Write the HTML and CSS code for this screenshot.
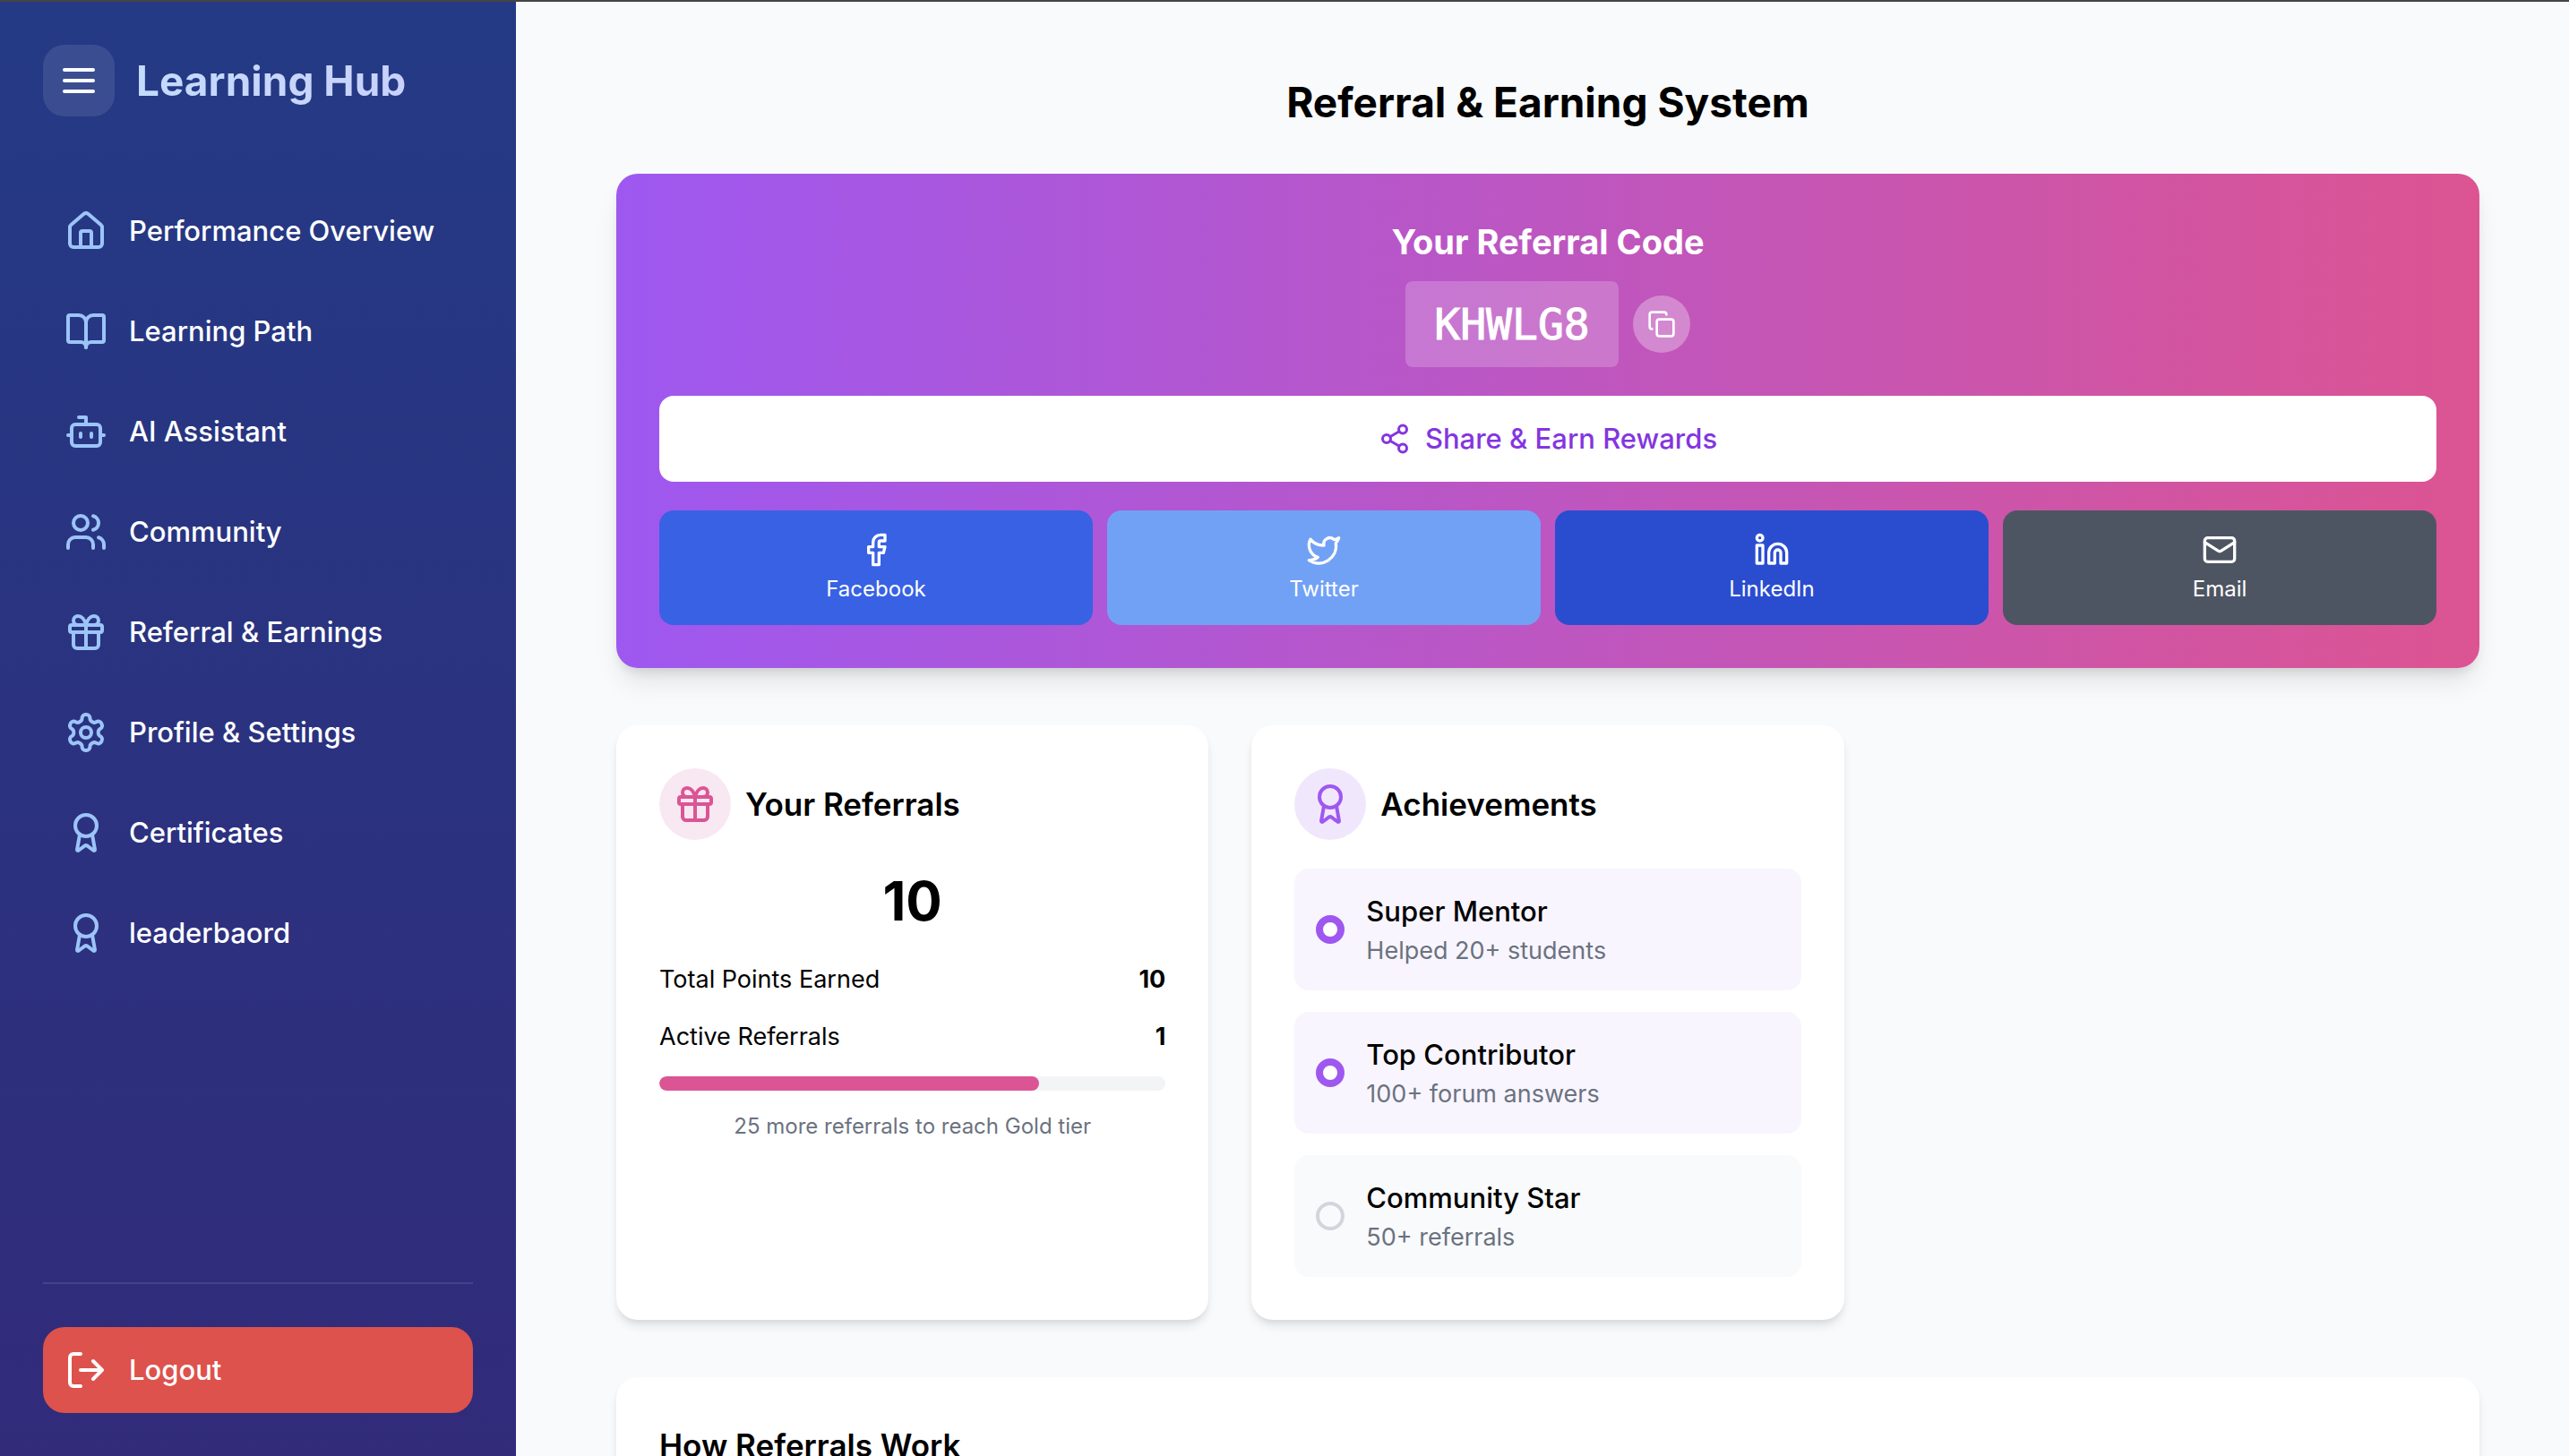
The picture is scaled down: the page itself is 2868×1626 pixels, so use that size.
FILE: index.html
```html
<!DOCTYPE html>
<html lang="en">
<head>
<meta charset="utf-8">
<meta name="viewport" content="width=device-width, initial-scale=1">
<title>Learning Hub</title>
<link rel="stylesheet" href="styles.css">
</head>
<body>
<svg class="sprite" aria-hidden="true">
  <symbol id="i-menu" viewBox="0 0 24 24"><path d="M4 6h16M4 12h16M4 18h16"/></symbol>
  <symbol id="i-home" viewBox="0 0 24 24"><path d="M15 21v-8a1 1 0 0 0-1-1h-4a1 1 0 0 0-1 1v8"/><path d="M3 10a2 2 0 0 1 .709-1.528l7-5.999a2 2 0 0 1 2.582 0l7 5.999A2 2 0 0 1 21 10v9a2 2 0 0 1-2 2H5a2 2 0 0 1-2-2z"/></symbol>
  <symbol id="i-book" viewBox="0 0 24 24"><path d="M12 7v14"/><path d="M3 18a1 1 0 0 1-1-1V4a1 1 0 0 1 1-1h5a4 4 0 0 1 4 4 4 4 0 0 1 4-4h5a1 1 0 0 1 1 1v13a1 1 0 0 1-1 1h-6a3 3 0 0 0-3 3 3 3 0 0 0-3-3z"/></symbol>
  <symbol id="i-bot" viewBox="0 0 24 24"><path d="M12 8V4H8"/><rect width="16" height="12" x="4" y="8" rx="2"/><path d="M2 14h2M20 14h2M15 13v2M9 13v2"/></symbol>
  <symbol id="i-users" viewBox="0 0 24 24"><path d="M16 21v-2a4 4 0 0 0-4-4H6a4 4 0 0 0-4 4v2"/><circle cx="9" cy="7" r="4"/><path d="M22 21v-2a4 4 0 0 0-3-3.87M16 3.13a4 4 0 0 1 0 7.75"/></symbol>
  <symbol id="i-gift" viewBox="0 0 24 24"><rect x="3" y="8" width="18" height="4" rx="1"/><path d="M12 8v13"/><path d="M19 12v7a2 2 0 0 1-2 2H7a2 2 0 0 1-2-2v-7"/><path d="M7.5 8a2.5 2.5 0 0 1 0-5A4.8 8 0 0 1 12 8a4.8 8 0 0 1 4.5-5 2.5 2.5 0 0 1 0 5"/></symbol>
  <symbol id="i-settings" viewBox="0 0 24 24"><path d="M12.22 2h-.44a2 2 0 0 0-2 2v.18a2 2 0 0 1-1 1.73l-.43.25a2 2 0 0 1-2 0l-.15-.08a2 2 0 0 0-2.73.73l-.22.38a2 2 0 0 0 .73 2.73l.15.1a2 2 0 0 1 1 1.72v.51a2 2 0 0 1-1 1.74l-.15.09a2 2 0 0 0-.73 2.73l.22.38a2 2 0 0 0 2.73.73l.15-.08a2 2 0 0 1 2 0l.43.25a2 2 0 0 1 1 1.73V20a2 2 0 0 0 2 2h.44a2 2 0 0 0 2-2v-.18a2 2 0 0 1 1-1.73l.43-.25a2 2 0 0 1 2 0l.15.08a2 2 0 0 0 2.73-.73l.22-.39a2 2 0 0 0-.73-2.73l-.15-.08a2 2 0 0 1-1-1.74v-.5a2 2 0 0 1 1-1.74l.15-.09a2 2 0 0 0 .73-2.73l-.22-.38a2 2 0 0 0-2.73-.73l-.15.08a2 2 0 0 1-2 0l-.43-.25a2 2 0 0 1-1-1.73V4a2 2 0 0 0-2-2z"/><circle cx="12" cy="12" r="3"/></symbol>
  <symbol id="i-award" viewBox="0 0 24 24"><path d="m15.477 12.89 1.515 8.526a.5.5 0 0 1-.81.47l-3.58-2.687a1 1 0 0 0-1.197 0l-3.586 2.686a.5.5 0 0 1-.81-.469l1.514-8.526"/><circle cx="12" cy="8" r="6"/></symbol>
  <symbol id="i-logout" viewBox="0 0 24 24"><path d="M9 21H5a2 2 0 0 1-2-2V5a2 2 0 0 1 2-2h4"/><path d="m16 17 5-5-5-5M21 12H9"/></symbol>
  <symbol id="i-copy" viewBox="0 0 24 24"><rect width="14" height="14" x="8" y="8" rx="2"/><path d="M4 16c-1.1 0-2-.9-2-2V4c0-1.1.9-2 2-2h10c1.1 0 2 .9 2 2"/></symbol>
  <symbol id="i-share" viewBox="0 0 24 24"><circle cx="18" cy="5" r="3"/><circle cx="6" cy="12" r="3"/><circle cx="18" cy="19" r="3"/><path d="m8.59 13.51 6.83 3.98M15.41 6.51l-6.82 3.98"/></symbol>
  <symbol id="i-facebook" viewBox="0 0 24 24"><path d="M18 2h-3a5 5 0 0 0-5 5v3H7v4h3v8h4v-8h3l1-4h-4V7a1 1 0 0 1 1-1h3z"/></symbol>
  <symbol id="i-twitter" viewBox="0 0 24 24"><path d="M22 4s-.7 2.1-2 3.4c1.6 10-9.4 17.3-18 11.6 2.2.1 4.4-.6 6-2C3 15.5.5 9.6 3 5c2.2 2.6 5.6 4.1 9 4-.9-4.2 4-6.6 7-3.8 1.1 0 3-1.2 3-1.2z"/></symbol>
  <symbol id="i-linkedin" viewBox="0 0 24 24"><path d="M16 8a6 6 0 0 1 6 6v7h-4v-7a2 2 0 0 0-4 0v7h-4v-7a6 6 0 0 1 6-6z"/><rect width="4" height="12" x="2" y="9"/><circle cx="4" cy="4" r="2"/></symbol>
  <symbol id="i-mail" viewBox="0 0 24 24"><rect width="20" height="16" x="2" y="4" rx="2"/><path d="m22 7-8.97 5.7a1.94 1.94 0 0 1-2.06 0L2 7"/></symbol>
</svg>

<div class="app">
  <aside class="sidebar">
    <header class="brand">
      <button class="menu-button" type="button" aria-label="Toggle menu"><svg class="icon"><use href="#i-menu"/></svg></button>
      <span class="brand-name">Learning Hub</span>
    </header>
    <nav class="nav">
      <a class="nav-link" href="#overview"><svg class="icon"><use href="#i-home"/></svg>Performance Overview</a>
      <a class="nav-link" href="#path"><svg class="icon"><use href="#i-book"/></svg>Learning Path</a>
      <a class="nav-link" href="#assistant"><svg class="icon"><use href="#i-bot"/></svg>AI Assistant</a>
      <a class="nav-link" href="#community"><svg class="icon"><use href="#i-users"/></svg>Community</a>
      <a class="nav-link" href="#referral"><svg class="icon"><use href="#i-gift"/></svg>Referral &amp; Earnings</a>
      <a class="nav-link" href="#profile"><svg class="icon"><use href="#i-settings"/></svg>Profile &amp; Settings</a>
      <a class="nav-link" href="#certificates"><svg class="icon"><use href="#i-award"/></svg>Certificates</a>
      <a class="nav-link" href="#leaderboard"><svg class="icon"><use href="#i-award"/></svg>leaderbaord</a>
    </nav>
    <footer class="sidebar-footer">
      <button class="logout" type="button"><svg class="icon"><use href="#i-logout"/></svg>Logout</button>
    </footer>
  </aside>

  <main class="main">
    <h1 class="page-title">Referral &amp; Earning System</h1>

    <section class="hero">
      <div class="hero-head">
        <h2 class="hero-title">Your Referral Code</h2>
        <div class="code-row">
          <code class="code">KHWLG8</code>
          <button class="copy" type="button" aria-label="Copy code"><svg class="icon icon-sm"><use href="#i-copy"/></svg></button>
        </div>
      </div>
      <button class="share" type="button"><svg class="icon icon-md"><use href="#i-share"/></svg>Share &amp; Earn Rewards</button>
      <div class="socials">
        <button class="social facebook" type="button"><svg class="icon icon-lg"><use href="#i-facebook"/></svg>Facebook</button>
        <button class="social twitter" type="button"><svg class="icon icon-lg"><use href="#i-twitter"/></svg>Twitter</button>
        <button class="social linkedin" type="button"><svg class="icon icon-lg"><use href="#i-linkedin"/></svg>LinkedIn</button>
        <button class="social email" type="button"><svg class="icon icon-lg"><use href="#i-mail"/></svg>Email</button>
      </div>
    </section>

    <div class="cards">
      <section class="card">
        <header class="card-head">
          <span class="badge pink"><svg class="icon"><use href="#i-gift"/></svg></span>
          <h3 class="card-title">Your Referrals</h3>
        </header>
        <p class="count">10</p>
        <div class="stats">
          <div class="stat"><span>Total Points Earned</span><strong>10</strong></div>
          <div class="stat"><span>Active Referrals</span><strong>1</strong></div>
          <div class="track" role="progressbar" aria-label="Progress to Gold tier" aria-valuenow="75" aria-valuemin="0" aria-valuemax="100"><div class="fill" style="width: 75%"></div></div>
          <p class="note">25 more referrals to reach Gold tier</p>
        </div>
      </section>

      <section class="card">
        <header class="card-head">
          <span class="badge purple"><svg class="icon"><use href="#i-award"/></svg></span>
          <h3 class="card-title">Achievements</h3>
        </header>
        <ul class="achievements">
          <li class="achievement earned"><span class="dot"></span><div><h4 class="achievement-name">Super Mentor</h4><p class="achievement-info">Helped 20+ students</p></div></li>
          <li class="achievement earned"><span class="dot"></span><div><h4 class="achievement-name">Top Contributor</h4><p class="achievement-info">100+ forum answers</p></div></li>
          <li class="achievement"><span class="dot"></span><div><h4 class="achievement-name">Community Star</h4><p class="achievement-info">50+ referrals</p></div></li>
        </ul>
      </section>
    </div>

    <section class="card">
      <h3 class="card-title">How Referrals Work</h3>
    </section>
  </main>
</div>
</body>
</html>
```
FILE: styles.css
```css
*, *::before, *::after { box-sizing: border-box; margin: 0; padding: 0; }

body {
  font-family: Inter, "Liberation Sans", sans-serif;
  font-size: 31px;
  line-height: 48px;
  color: #000;
  background: #f9fafc;
}

button { font: inherit; color: inherit; border: 0; cursor: pointer; }
a { color: inherit; text-decoration: none; }
ul { list-style: none; }

.sprite { display: none; }

.icon {
  width: 48px;
  height: 48px;
  flex: none;
  fill: none;
  stroke: currentColor;
  stroke-width: 2;
  stroke-linecap: round;
  stroke-linejoin: round;
}
.icon-sm { width: 32px; height: 32px; }
.icon-md { width: 36px; height: 36px; }
.icon-lg { width: 40px; height: 40px; }

.app {
  display: flex;
  height: 100vh;
  border-top: 2px solid #454545;
}

/* Sidebar */
.sidebar {
  display: flex;
  flex-direction: column;
  flex: none;
  width: 576px;
  padding: 48px;
  color: #fff;
  background: linear-gradient(to bottom, #243a85, #312b7a);
}

.brand { display: flex; align-items: center; gap: 24px; margin-bottom: 80px; }

.menu-button {
  display: flex;
  padding: 16px;
  border-radius: 24px;
  background: rgba(255, 255, 255, 0.1);
}

.brand-name {
  font-size: 46px;
  line-height: 64px;
  font-weight: 700;
  color: transparent;
  background: linear-gradient(to right, #c4dbfc, #c9d1fb);
  background-clip: text;
}

.nav { display: flex; flex-direction: column; gap: 16px; flex: 1; }

.nav-link, .logout {
  display: flex;
  align-items: center;
  gap: 24px;
  padding: 24px;
  border-radius: 24px;
  font-weight: 500;
}
.nav-link .icon { color: #9cc4f9; }

.sidebar-footer { padding-top: 48px; border-top: 2px solid rgba(255, 255, 255, 0.1); }
.logout { width: 100%; background: #dd524c; }

/* Main column */
.main {
  display: flex;
  flex-direction: column;
  gap: 64px;
  flex: 1;
  padding: 80px 100px 64px 112px;
  overflow-y: auto;
  scrollbar-width: none;
}
.main > * { flex: none; }

.page-title {
  margin-bottom: -16px;
  font-size: 46px;
  line-height: 64px;
  font-weight: 700;
  text-align: center;
}

.hero {
  display: flex;
  flex-direction: column;
  gap: 32px;
  padding: 48px;
  border-radius: 24px;
  color: #fff;
  background: linear-gradient(to right, #9e58f0, #dc5492);
  box-shadow: 0 20px 30px -6px rgba(0, 0, 0, 0.1), 0 8px 12px -4px rgba(0, 0, 0, 0.1);
}
.hero-head { display: flex; flex-direction: column; align-items: center; gap: 16px; }
.hero-title { font-size: 38px; line-height: 56px; font-weight: 700; }

.code-row { display: flex; align-items: center; gap: 16px; }
.code {
  padding: 16px 32px;
  border-radius: 8px;
  font-family: "DejaVu Sans Mono", monospace;
  font-size: 48px;
  line-height: 64px;
  -webkit-text-stroke: 1px currentColor;
  background: rgba(255, 255, 255, 0.2);
}
.copy {
  display: flex;
  padding: 16px;
  border-radius: 50%;
  background: rgba(255, 255, 255, 0.3);
}

.share {
  display: flex;
  align-items: center;
  justify-content: center;
  gap: 16px;
  padding: 24px;
  border-radius: 16px;
  font-weight: 500;
  color: #8435df;
  background: #fff;
}

.socials { display: grid; grid-template-columns: repeat(4, 1fr); gap: 16px; }
.social {
  display: flex;
  flex-direction: column;
  align-items: center;
  gap: 8px;
  padding: 24px;
  border-radius: 16px;
  font-size: 24px;
  line-height: 32px;
}
.facebook { background: #3862e3; }
.twitter { background: #71a1f5; }
.linkedin { background: #2a4dd0; }
.email { background: #4e5562; }

/* Cards */
.cards { display: grid; grid-template-columns: repeat(3, 1fr); gap: 48px; }
.card {
  padding: 48px;
  border-radius: 24px;
  background: #fff;
  box-shadow: 0 8px 12px -2px rgba(0, 0, 0, 0.1), 0 4px 8px -4px rgba(0, 0, 0, 0.1);
}
.card-head { display: flex; align-items: center; gap: 16px; margin-bottom: 32px; }
.card-title { font-size: 35px; line-height: 56px; font-weight: 600; }

.badge { display: flex; padding: 16px; border-radius: 50%; }
.pink { color: #db5595; background: #f8e8f2; }
.purple { color: #9e58f0; background: #f1e7fd; }

.count { font-size: 60px; line-height: 72px; font-weight: 700; text-align: center; }

.stats { display: flex; flex-direction: column; gap: 24px; margin-top: 32px; }
.stat { display: flex; justify-content: space-between; font-size: 27px; line-height: 40px; }
.stat strong { font-weight: 700; }
.track { height: 16px; border-radius: 8px; background: #f3f4f6; overflow: hidden; }
.fill { height: 100%; border-radius: 8px; background: #db5595; }
.note { font-size: 24px; line-height: 32px; text-align: center; color: #6b7280; }

.achievements { display: flex; flex-direction: column; gap: 24px; }
.achievement {
  display: flex;
  align-items: center;
  gap: 24px;
  padding: 24px;
  border-radius: 16px;
  background: #f9fafc;
}
.dot { width: 32px; height: 32px; border: 4px solid #d2d5db; border-radius: 50%; }
.earned { background: #f8f5fe; }
.earned .dot { border: 8px solid #9e58f0; background: #fff; }
.achievement-name { font-size: 31px; line-height: 48px; font-weight: 500; }
.achievement-info { font-size: 27px; line-height: 40px; color: #6b7280; }
```
